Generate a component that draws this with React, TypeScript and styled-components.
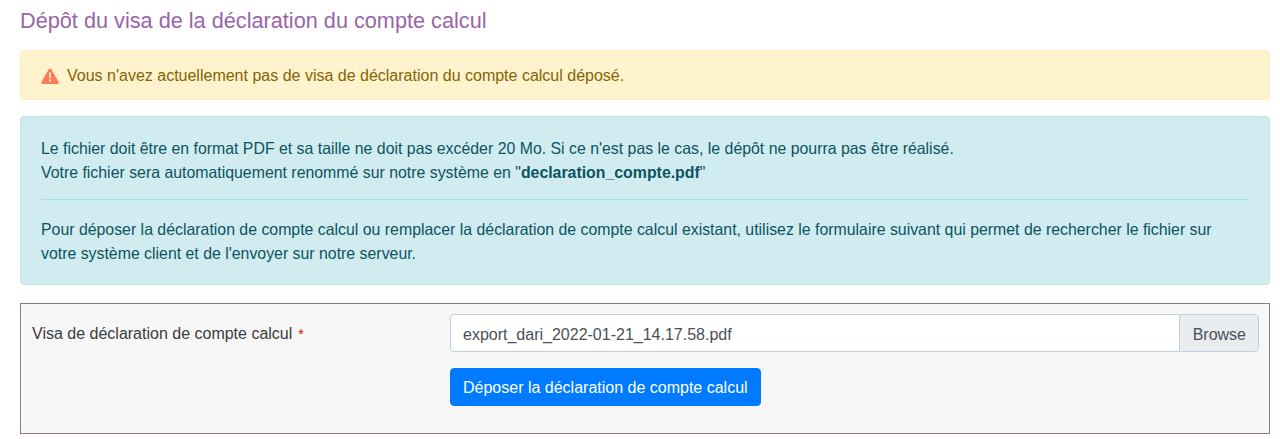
import styled, { createGlobalStyle } from 'styled-components';

const GlobalStyle = createGlobalStyle`
  * {
    box-sizing: border-box;
  }
  body {
    background: #fff;
    color: #212529;
    font-family: 'Liberation Sans', Arial, sans-serif;
    font-size: 16px;
    line-height: 24px;
    margin: 0;
  }
`;

const Page = styled.div`
  padding: 8px 10px 0 20px;
`;

const Title = styled.h2`
  color: #9a64a8;
  font-size: 21.7px;
  font-weight: 400;
  line-height: 26px;
  margin: 0 0 16px;
`;

const Alert = styled.div<{ $kind: 'warning' | 'info' }>`
  background: ${(p) => (p.$kind === 'warning' ? '#fff3cd' : '#d1ecf1')};
  border: 1px solid ${(p) => (p.$kind === 'warning' ? '#ffeeba' : '#bee5eb')};
  border-radius: 4px;
  color: ${(p) => (p.$kind === 'warning' ? '#856404' : '#0c5460')};
  font-size: ${(p) => (p.$kind === 'warning' ? '16px' : '15.87px')};
  margin-bottom: ${(p) => (p.$kind === 'warning' ? '16px' : '18px')};
  padding: ${(p) => (p.$kind === 'warning' ? '13px 20px 11px' : '20px 20px 18px')};
`;

const WarningRow = styled.div`
  align-items: center;
  display: flex;
  gap: 8px;
`;

const Paragraph = styled.p`
  margin: 0;
`;

const Divider = styled.hr`
  border: 0;
  border-top: 1px solid #abdde5;
  margin: 14px 0 18px;
`;

const FormBox = styled.form`
  align-content: start;
  background: #f7f7f7;
  border: 1px solid #94709a;
  display: grid;
  gap: 16px 0;
  grid-template-columns: 418px 1fr;
  height: 131px;
  padding: 10px 10px 0 11px;
`;

const Label = styled.label`
  color: #3b3b3b;
  height: 38px;
  line-height: 38px;
  padding-top: 1px;
`;

const Required = styled.span`
  color: #e3000f;
  font-size: 14px;
  margin-left: 6px;
`;

const FileField = styled.div`
  background: #fff;
  border: 1px solid #c3cfe0;
  border-radius: 4px;
  display: flex;
  height: 38px;
  justify-content: space-between;
  overflow: hidden;
`;

const FileName = styled.span`
  color: #495057;
  line-height: 36px;
  padding: 2px 0 0 12px;
`;

const Browse = styled.span`
  background: #e9ecef;
  border-left: 1px solid #c3cfe0;
  color: #495057;
  line-height: 36px;
  padding: 2px 12px 0 13px;
`;

const SubmitButton = styled.button`
  background: #007bff;
  border: 1px solid #007bff;
  border-radius: 4px;
  color: #fff;
  font: inherit;
  grid-column: 2;
  height: 38px;
  justify-self: start;
  padding: 2px 12px 0;
`;

const WarningIcon = () => (
  <svg width='18' height='16' viewBox='0 0 18 16'>
    <path
      d='M7.9 1.1a1.3 1.3 0 0 1 2.2 0l7.5 12.9a1.3 1.3 0 0 1-1.1 1.9H1.5A1.3 1.3 0 0 1 .4 14z'
      fill='#ff7a59'
    />
    <path d='M8 4.6h2l-.3 5.6H8.3zM8 11.4h2v2H8z' fill='#fff3cd' />
  </svg>
);

const App = () => (
  <Page>
    <GlobalStyle />
    <Title>Dépôt du visa de la déclaration du compte calcul</Title>
    <Alert $kind='warning'>
      <WarningRow>
        <WarningIcon />
        Vous n'avez actuellement pas de visa de déclaration du compte calcul déposé.
      </WarningRow>
    </Alert>
    <Alert $kind='info'>
      <Paragraph>
        Le fichier doit être en format PDF et sa taille ne doit pas excéder 20 Mo. Si ce n'est pas le cas, le dépôt ne
        pourra pas être réalisé.
        <br />
        Votre fichier sera automatiquement renommé sur notre système en "<strong>declaration_compte.pdf</strong>"
      </Paragraph>
      <Divider />
      <Paragraph>
        Pour déposer la déclaration de compte calcul ou remplacer la déclaration de compte calcul existant, utilisez le
        formulaire suivant qui permet de rechercher le fichier sur votre système client et de l'envoyer sur notre
        serveur.
      </Paragraph>
    </Alert>
    <FormBox>
      <Label>
        Visa de déclaration de compte calcul<Required>*</Required>
      </Label>
      <FileField>
        <FileName>export_dari_2022-01-21_14.17.58.pdf</FileName>
        <Browse>Browse</Browse>
      </FileField>
      <SubmitButton type='button'>Déposer la déclaration de compte calcul</SubmitButton>
    </FormBox>
  </Page>
);

export default App;
